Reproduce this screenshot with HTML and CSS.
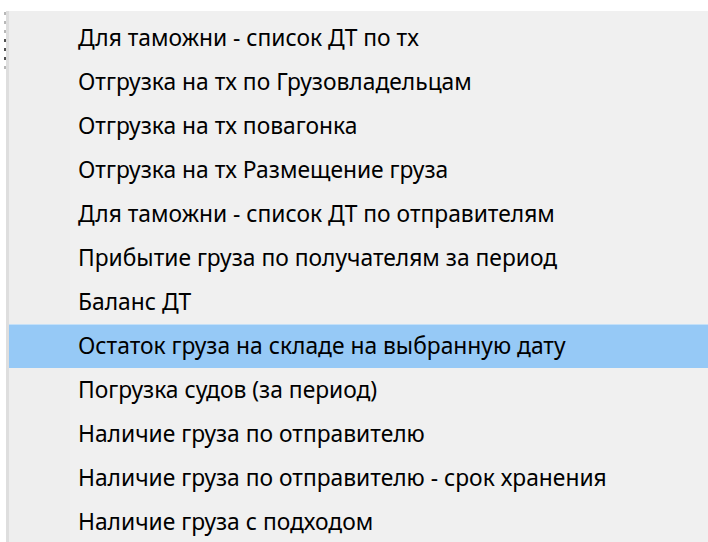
FILE: index.html
```html
<!DOCTYPE html>
<html lang="ru">
<head>
<meta charset="utf-8">
<title>Отчёты</title>
<link rel="stylesheet" href="styles.css">
</head>
<body>
<div class="topband"></div>
<div class="frame">
  <div class="grip">
    <span class="dot light"></span>
    <span class="dot light"></span>
    <span class="dot light"></span>
    <span class="dot dark"></span>
    <span class="dot dark"></span>
    <span class="dot dark"></span>
    <span class="dot light"></span>
  </div>
  <div class="edge"></div>
  <ul class="menu">
    <li class="item">Для таможни - список ДТ по тх</li>
    <li class="item">Отгрузка на тх по Грузовладельцам</li>
    <li class="item">Отгрузка на тх повагонка</li>
    <li class="item">Отгрузка на тх Размещение груза</li>
    <li class="item">Для таможни - список ДТ по отправителям</li>
    <li class="item">Прибытие груза по получателям за период</li>
    <li class="item">Баланс ДТ</li>
    <li class="item active">Остаток груза на складе на выбранную дату</li>
    <li class="item">Погрузка судов (за период)</li>
    <li class="item">Наличие груза по отправителю</li>
    <li class="item">Наличие груза по отправителю - срок хранения</li>
    <li class="item">Наличие груза с подходом</li>
  </ul>
</div>
</body>
</html>
```

FILE: styles.css
```css
html, body {
  margin: 0;
  padding: 0;
  background: #ffffff;
  height: 100%;
  overflow: hidden;
}

.topband {
  height: 11px;
  background: #ffffff;
}

.frame {
  display: flex;
  height: 531px;
}

/* splitter grip with its dotted handle */
.grip {
  width: 6px;
  background: #ffffff;
  display: flex;
  flex-direction: column;
  align-items: flex-end;
  gap: 6px;
  padding-top: 1px;
}

.dot {
  display: block;
  width: 2px;
  height: 3px;
}

.dot.light { background: #b8b8b8; }
.dot.dark { background: #505050; }

.edge {
  width: 3px;
  background: #dedede;
}

.menu {
  flex: 1;
  list-style: none;
  margin: 0;
  padding: 5px 0 0 0;
  background: linear-gradient(to right, #eeeeee 0, #eeeeee 61px, #f0f0f0 61px);
  font-family: "Noto Sans", "Open Sans", sans-serif;
  font-size: 22.8px;
  color: #000000;
}

.item {
  height: 44px;
  line-height: 44px;
  padding-left: 69px;
  white-space: nowrap;
  box-sizing: border-box;
}

.item.active {
  background: #96c9f6;
  border-top: 1px solid #c4e0f8;
  line-height: 42px;
}
```
